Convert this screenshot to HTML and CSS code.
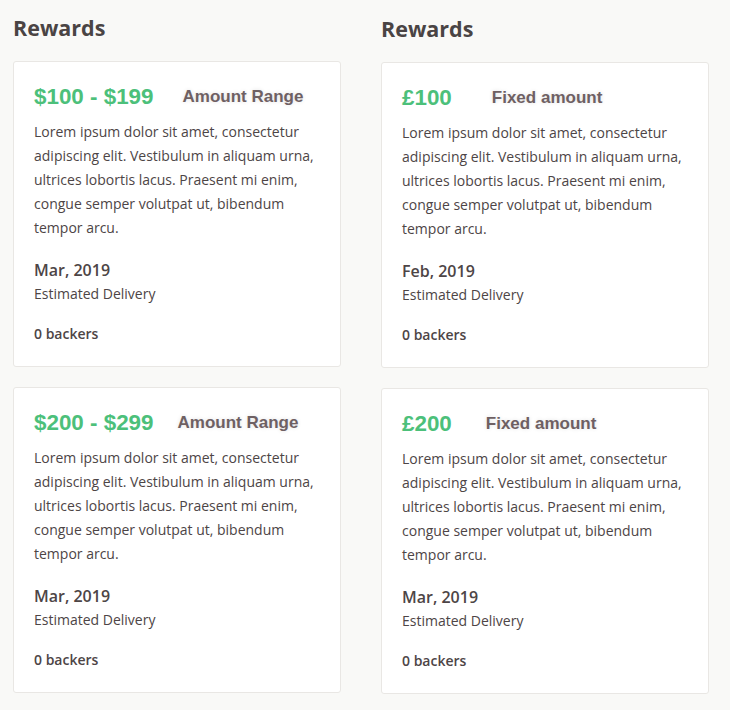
FILE: index.html
```html
<!DOCTYPE html>
<html lang="en">
<head>
<meta charset="utf-8">
<title>Rewards</title>
<link rel="stylesheet" href="styles.css">
</head>
<body>
<main class="page">
  <section class="column">
    <h2 class="heading">Rewards</h2>
    <article class="card">
      <div class="card-head">
        <span class="price">$100 - $199</span>
        <span class="kind kind-a">Amount Range</span>
      </div>
      <p class="desc">Lorem ipsum dolor sit amet, consectetur adipiscing elit. Vestibulum in aliquam urna, ultrices lobortis lacus. Praesent mi enim, congue semper volutpat ut, bibendum tempor arcu.</p>
      <div class="date">Mar, 2019</div>
      <div class="date-label">Estimated Delivery</div>
      <div class="backers">0 backers</div>
    </article>
    <article class="card">
      <div class="card-head">
        <span class="price">$200 - $299</span>
        <span class="kind kind-b">Amount Range</span>
      </div>
      <p class="desc">Lorem ipsum dolor sit amet, consectetur adipiscing elit. Vestibulum in aliquam urna, ultrices lobortis lacus. Praesent mi enim, congue semper volutpat ut, bibendum tempor arcu.</p>
      <div class="date">Mar, 2019</div>
      <div class="date-label">Estimated Delivery</div>
      <div class="backers">0 backers</div>
    </article>
  </section>
  <section class="column column-right">
    <h2 class="heading">Rewards</h2>
    <article class="card">
      <div class="card-head">
        <span class="price">£100</span>
        <span class="kind kind-c">Fixed amount</span>
      </div>
      <p class="desc">Lorem ipsum dolor sit amet, consectetur adipiscing elit. Vestibulum in aliquam urna, ultrices lobortis lacus. Praesent mi enim, congue semper volutpat ut, bibendum tempor arcu.</p>
      <div class="date">Feb, 2019</div>
      <div class="date-label">Estimated Delivery</div>
      <div class="backers">0 backers</div>
    </article>
    <article class="card">
      <div class="card-head">
        <span class="price">£200</span>
        <span class="kind kind-d">Fixed amount</span>
      </div>
      <p class="desc">Lorem ipsum dolor sit amet, consectetur adipiscing elit. Vestibulum in aliquam urna, ultrices lobortis lacus. Praesent mi enim, congue semper volutpat ut, bibendum tempor arcu.</p>
      <div class="date">Mar, 2019</div>
      <div class="date-label">Estimated Delivery</div>
      <div class="backers">0 backers</div>
    </article>
  </section>
</main>
</body>
</html>
```
FILE: styles.css
```css
html, body {
  margin: 0;
  padding: 0;
  background: #f9f9f7;
}
body {
  font-family: "Open Sans", "Liberation Sans", sans-serif;
  color: #4d4546;
}
.page {
  display: flex;
  gap: 40px;
  padding: 13px 0 0 13px;
}
.column {
  width: 328px;
  display: flex;
  flex-direction: column;
  gap: 20px;
}
.column-right {
  padding-top: 1px;
}
.heading {
  margin: 0 0 -2px 0;
  font-size: 21.5px;
  line-height: 30px;
  font-weight: 700;
  color: #4a4444;
}
.card {
  background: #ffffff;
  border: 1px solid #e9e7e4;
  border-radius: 3px;
  padding: 20px;
  height: 264px;
}
.card-head {
  display: flex;
  align-items: center;
  height: 30px;
}
.price {
  font-family: "Liberation Sans", Arial, sans-serif;
  font-weight: 700;
  font-size: 22.4px;
  color: #4cc07a;
}
.kind {
  font-family: "Liberation Sans", Arial, sans-serif;
  font-weight: 700;
  font-size: 17px;
  color: #6e6063;
  text-shadow: 0 0 4px rgba(0, 0, 0, 0.12);
}
.kind-a { margin-left: 29px; }
.kind-b { margin-left: 24px; }
.kind-c { margin-left: 40px; }
.kind-d { margin-left: 34px; }
.desc {
  margin: 8px 0 0 0;
  font-size: 14px;
  line-height: 24px;
}
.date {
  margin-top: 18px;
  font-size: 16px;
  line-height: 24px;
  font-weight: 600;
}
.date-label {
  font-size: 14px;
  line-height: 24px;
}
.backers {
  margin-top: 16px;
  font-size: 14px;
  line-height: 24px;
  font-weight: 600;
}
```
